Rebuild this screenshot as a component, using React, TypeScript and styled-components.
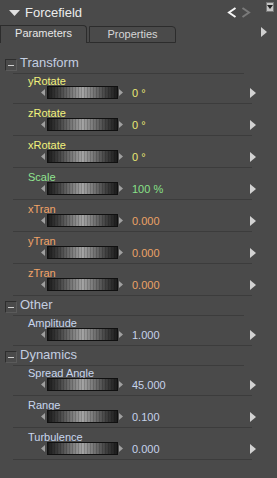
import styled, { createGlobalStyle } from "styled-components";

type Tone = "yellow" | "green" | "orange" | "blue";

type Param = {
    label: string;
    value: string;
    tone: Tone;
};

type Group = {
    name: string;
    params: Param[];
};

const tones: Record<Tone, { label: string; value: string }> = {
    yellow: { label: "#f2f27c", value: "#e8e874" },
    green: { label: "#90e490", value: "#88e088" },
    orange: { label: "#f2a468", value: "#eaa266" },
    blue: { label: "#c8d6ee", value: "#c6d2ea" },
};

const groups: Group[] = [
    {
        name: "Transform",
        params: [
            { label: "yRotate", value: "0 °", tone: "yellow" },
            { label: "zRotate", value: "0 °", tone: "yellow" },
            { label: "xRotate", value: "0 °", tone: "yellow" },
            { label: "Scale", value: "100 %", tone: "green" },
            { label: "xTran", value: "0.000", tone: "orange" },
            { label: "yTran", value: "0.000", tone: "orange" },
            { label: "zTran", value: "0.000", tone: "orange" },
        ],
    },
    {
        name: "Other",
        params: [{ label: "Amplitude", value: "1.000", tone: "blue" }],
    },
    {
        name: "Dynamics",
        params: [
            { label: "Spread Angle", value: "45.000", tone: "blue" },
            { label: "Range", value: "0.100", tone: "blue" },
            { label: "Turbulence", value: "0.000", tone: "blue" },
        ],
    },
];

const App: React.FC = () => {
    return (
        <>
            <GlobalStyle />
            <Panel>
                <TitleBar>
                    <svg width="11" height="6" viewBox="0 0 11 6">
                        <polygon points="0,0 11,0 5.5,6" fill="#e0e0e0" />
                    </svg>
                    <Title>Forcefield</Title>
                    <Nav>
                        <svg width="10" height="11" viewBox="0 0 10 11">
                            <polyline points="8.5,1 2,5.5 8.5,10" fill="none" stroke="#f6f6f6" strokeWidth="2" />
                        </svg>
                        <svg width="10" height="11" viewBox="0 0 10 11">
                            <polyline points="1.5,1 8,5.5 1.5,10" fill="none" stroke="#7a7a7a" strokeWidth="2" />
                        </svg>
                    </Nav>
                    <MenuButton>
                        <svg width="6" height="4" viewBox="0 0 6 4">
                            <polygon points="0,0 6,0 3,4" fill="#222" />
                        </svg>
                    </MenuButton>
                </TitleBar>

                <TabRow>
                    <Tab $active>Parameters</Tab>
                    <TabGap />
                    <Tab>Properties</Tab>
                    <TabMore>
                        <svg width="6" height="10" viewBox="0 0 6 10">
                            <polygon points="0,0 6,5 0,10" fill="#d0d0d0" />
                        </svg>
                    </TabMore>
                </TabRow>

                <Content>
                    {groups.map((group) => (
                        <section key={group.name}>
                            <GroupHeader>
                                <CollapseBox />
                                <GroupName>{group.name}</GroupName>
                            </GroupHeader>
                            <Rule $width={231} />
                            {group.params.map((param) => (
                                <div key={param.label}>
                                    <Row>
                                        <Label $color={tones[param.tone].label}>{param.label}</Label>
                                        <Control>
                                            <Nudge viewBox="0 0 4 7">
                                                <polygon points="4,0 0,3.5 4,7" fill="#a0a0a0" />
                                            </Nudge>
                                            <Dial />
                                            <Nudge viewBox="0 0 4 7">
                                                <polygon points="0,0 4,3.5 0,7" fill="#a0a0a0" />
                                            </Nudge>
                                            <Value $color={tones[param.tone].value}>{param.value}</Value>
                                            <RowMenu viewBox="0 0 6 10">
                                                <polygon points="0,0 6,5 0,10" fill="#d2d2d2" />
                                            </RowMenu>
                                        </Control>
                                    </Row>
                                    <Rule $width={239} $gap={2} />
                                </div>
                            ))}
                        </section>
                    ))}
                </Content>
            </Panel>
        </>
    );
};

// Styled Components

const GlobalStyle = createGlobalStyle`
    html, body {
        margin: 0;
        padding: 0;
        background: #4a4a4a;
    }
    body {
        font-family: "Liberation Sans", Arial, sans-serif;
    }
`;

const Panel = styled.div`
    width: 277px;
    height: 478px;
    overflow: hidden;
    background: #4a4a4a;
`;

const TitleBar = styled.div`
    display: flex;
    align-items: center;
    height: 25px;
    padding: 0 3px 0 9px;
    box-sizing: border-box;
`;

const Title = styled.span`
    margin-left: 5px;
    font-size: 13px;
    line-height: 15px;
    color: #ececec;
`;

const Nav = styled.div`
    display: flex;
    gap: 4px;
    margin-left: auto;
`;

const MenuButton = styled.div`
    align-self: flex-start;
    display: flex;
    align-items: center;
    justify-content: center;
    margin: 2px 0 0 15px;
    width: 8px;
    height: 10px;
    box-sizing: border-box;
    background: #c4c4c4;
    border: 1px solid #777;
`;

const TabRow = styled.div`
    display: flex;
    align-items: flex-end;
    height: 18px;
`;

const Tab = styled.div<{ $active?: boolean }>`
    width: 87px;
    height: ${(p) => (p.$active ? "18px" : "17px")};
    box-sizing: border-box;
    border: 1px solid #2c2c2c;
    border-bottom: ${(p) => (p.$active ? "none" : "1px solid #2c2c2c")};
    border-radius: 0 4px 0 0;
    text-align: center;
    font-size: 11px;
    line-height: 15px;
    color: ${(p) => (p.$active ? "#e6e6e6" : "#d6d6d6")};
`;

const TabGap = styled.div`
    width: 2px;
    height: 1px;
    background: #2c2c2c;
`;

const TabMore = styled.div`
    align-self: flex-start;
    display: flex;
    margin: 2px 10px 0 auto;
`;

const Content = styled.div`
    padding-top: 13px;
`;

const GroupHeader = styled.div`
    display: flex;
    align-items: flex-start;
    height: 17px;
    padding-left: 5px;
`;

const CollapseBox = styled.div`
    display: flex;
    align-items: center;
    justify-content: center;
    margin-top: 3px;
    width: 12px;
    height: 12px;
    box-sizing: border-box;
    border: 1px solid #2e2e2e;
    border-right-color: #5a5a5a;
    border-bottom-color: #5a5a5a;

    &::after {
        content: "";
        width: 6px;
        height: 1px;
        background: #d0d0d0;
    }
`;

const GroupName = styled.span`
    margin: -1px 0 0 3px;
    font-size: 13px;
    line-height: 15px;
    color: #c4cee0;
`;

const Rule = styled.div<{ $width: number; $gap?: number }>`
    margin: 0 0 ${(p) => p.$gap ?? 0}px 13px;
    width: ${(p) => p.$width}px;
    height: 1px;
    background: #3c3c3c;
`;

const Row = styled.div`
    height: 29px;
`;

const Label = styled.div<{ $color: string }>`
    height: 11px;
    padding: 1px 0 0 28px;
    font-size: 11px;
    line-height: 12px;
    color: ${(p) => p.$color};
    white-space: nowrap;
`;

const Control = styled.div`
    display: flex;
    align-items: center;
    height: 13px;
    padding: 0 21px 0 41px;
`;

const Nudge = styled.svg`
    width: 4px;
    height: 7px;
    margin: 0 1px;
    &:first-child {
        margin: 0 2px 0 0;
    }
`;

const Dial = styled.div`
    width: 71px;
    height: 13px;
    box-sizing: border-box;
    border: 1px solid #101010;
    background:
        repeating-linear-gradient(90deg, rgba(0, 0, 0, 0.16) 0 1px, transparent 1px 3px),
        linear-gradient(90deg, #1c1c1c 0%, #3e3e3e 15%, #7a7a7a 35%, #a4a4a4 50%, #7a7a7a 65%, #3e3e3e 85%, #1c1c1c 100%);
`;

const Value = styled.span<{ $color: string }>`
    margin: 2px 0 0 8px;
    font-size: 11px;
    line-height: 13px;
    color: ${(p) => p.$color};
    white-space: nowrap;
`;

const RowMenu = styled.svg`
    width: 6px;
    height: 10px;
    margin-left: auto;
`;

export default App;
